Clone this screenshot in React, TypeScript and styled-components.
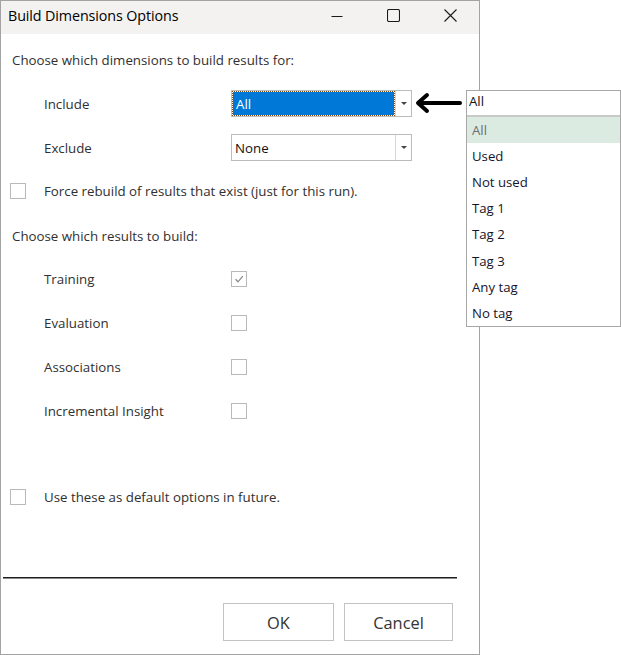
import React from "react";
import styled, { createGlobalStyle } from "styled-components";

const Global = createGlobalStyle`
  html, body { margin: 0; padding: 0; background: #ffffff; }
  body { font-family: "Open Sans", "Noto Sans", sans-serif; }
  * { box-sizing: border-box; }
`;

const Page = styled.div`
  position: relative;
  width: 621px;
  height: 655px;
  overflow: hidden;
`;

const Window = styled.div`
  width: 480px;
  height: 655px;
  border: 1px solid #a3a3a3;
  background: #ffffff;
  display: flex;
  flex-direction: column;
`;

const TitleBar = styled.div`
  height: 33px;
  flex: none;
  background: #f3f2f1;
  display: flex;
  align-items: center;
  padding: 0 0 4px 7px;
`;

const Title = styled.div`
  flex: 1;
  font-size: 14.3px;
  color: #000;
  letter-spacing: -0.1px;
`;

const CaptionButton = styled.div`
  width: 57px;
  height: 29px;
  display: flex;
  align-items: center;
  justify-content: center;
  color: #1a1a1a;
`;

const Content = styled.div`
  flex: 1;
  display: flex;
  flex-direction: column;
  padding: 16px 0 0 0;
  color: #303030;
  font-size: 13.3px;
`;

const Heading = styled.div<{ $top: number }>`
  margin-top: ${(p) => p.$top}px;
  height: 20px;
  line-height: 20px;
  padding-left: 11px;
`;

const FieldRow = styled.div<{ $top: number }>`
  margin-top: ${(p) => p.$top}px;
  height: 27px;
  display: grid;
  grid-template-columns: 187px 181px;
  align-items: center;
  padding-left: 43px;
`;

const Label = styled.span`
  white-space: nowrap;
`;

const Combo = styled.div`
  height: 27px;
  border: 1px solid #bcbcbc;
  display: flex;
  background: #fff;
`;

const ComboValue = styled.div<{ $focused?: boolean }>`
  flex: 1;
  display: flex;
  align-items: center;
  padding-left: 3px;
  margin: ${(p) => (p.$focused ? "1px" : "0")};
  font-size: 13.3px;
  color: ${(p) => (p.$focused ? "#ffffff" : "#111")};
  background: ${(p) => (p.$focused ? "#0078d7" : "transparent")};
  outline: ${(p) => (p.$focused ? "1px dotted #7a4a1a" : "none")};
`;

const ComboButton = styled.div`
  width: 16px;
  border-left: 1px solid #d6d6d6;
  display: flex;
  align-items: center;
  justify-content: center;
`;

const Caret = styled.span`
  width: 0;
  height: 0;
  border-left: 3px solid transparent;
  border-right: 3px solid transparent;
  border-top: 3px solid #444;
`;

const CheckRow = styled.div<{ $top: number }>`
  margin-top: ${(p) => p.$top}px;
  height: 16px;
  display: flex;
  align-items: center;
  padding-left: 9px;
`;

const CheckLabel = styled.span`
  margin-left: 18px;
  white-space: nowrap;
`;

const OptionRow = styled.div<{ $top: number }>`
  margin-top: ${(p) => p.$top}px;
  height: 20px;
  display: grid;
  grid-template-columns: 187px 16px;
  align-items: center;
  padding-left: 43px;
`;

const Box = styled.div`
  width: 16px;
  height: 16px;
  border: 1px solid #b9b9b9;
  background: #fff;
  display: flex;
  align-items: center;
  justify-content: center;
`;

const Separator = styled.div`
  margin: 72px 22px 0 2px;
  height: 2px;
  background: #1e1e1e;
  border-bottom: 1px solid #8a8a8a;
`;

const ButtonRow = styled.div`
  margin-top: 24px;
  display: flex;
  justify-content: flex-end;
  gap: 10px;
  padding-right: 26px;
`;

const DialogButton = styled.div<{ $w: number }>`
  width: ${(p) => p.$w}px;
  height: 38px;
  border: 1px solid #c3c3c3;
  background: #fff;
  display: flex;
  align-items: center;
  justify-content: center;
  font-size: 16.4px;
  color: #333;
`;

/* expanded list of the Include combo, floating over the window edge */
const DropList = styled.div`
  position: absolute;
  left: 466px;
  top: 90px;
  width: 155px;
  height: 237px;
  border: 1px solid #a8a8a8;
  background: #fff;
  display: flex;
  flex-direction: column;
  font-size: 13.2px;
`;

const DropEdit = styled.div`
  height: 26px;
  flex: none;
  padding: 1px 0 0 2px;
  line-height: 18px;
  border-bottom: 2px solid #c9c9c9;
  color: #111;
`;

const DropItem = styled.div<{ $active?: boolean }>`
  height: 26.2px;
  flex: none;
  display: flex;
  align-items: center;
  padding: 0 0 1px 5px;
  background: ${(p) => (p.$active ? "#dcebe2" : "transparent")};
  color: ${(p) => (p.$active ? "#6e6e6e" : "#14142a")};
`;

const Pointer = styled.svg`
  position: absolute;
  left: 414px;
  top: 92px;
`;

const items = ["All", "Used", "Not used", "Tag 1", "Tag 2", "Tag 3", "Any tag", "No tag"];

const options = [
  { label: "Training", checked: true, top: 23 },
  { label: "Evaluation", checked: false, top: 24 },
  { label: "Associations", checked: false, top: 24 },
  { label: "Incremental Insight", checked: false, top: 24 },
];

const Tick = () => (
  <svg width="12" height="12" viewBox="0 0 12 12">
    <path d="M2.5 6.3 L5 8.8 L9.8 3.2" fill="none" stroke="#8c8c8c" strokeWidth="1.3" />
  </svg>
);

export default function App() {
  return (
    <Page>
      <Global />
      <Window>
        <TitleBar>
          <Title>Build Dimensions Options</Title>
          <CaptionButton>
            <svg width="12" height="12" viewBox="0 0 12 12">
              <path d="M0.5 6.5 H11.5" stroke="#1a1a1a" strokeWidth="1" />
            </svg>
          </CaptionButton>
          <CaptionButton>
            <svg width="13" height="13" viewBox="0 0 13 13">
              <rect x="0.5" y="0.5" width="12" height="12" rx="1.5" fill="none" stroke="#1a1a1a" strokeWidth="1.1" />
            </svg>
          </CaptionButton>
          <CaptionButton>
            <svg width="13" height="13" viewBox="0 0 13 13">
              <path d="M0.5 0.5 L12.5 12.5 M12.5 0.5 L0.5 12.5" stroke="#1a1a1a" strokeWidth="1.1" />
            </svg>
          </CaptionButton>
        </TitleBar>
        <Content>
          <Heading $top={0}>Choose which dimensions to build results for:</Heading>
          <FieldRow $top={20}>
            <Label>Include</Label>
            <Combo>
              <ComboValue $focused>All</ComboValue>
              <ComboButton>
                <Caret />
              </ComboButton>
            </Combo>
          </FieldRow>
          <FieldRow $top={17}>
            <Label>Exclude</Label>
            <Combo>
              <ComboValue>None</ComboValue>
              <ComboButton>
                <Caret />
              </ComboButton>
            </Combo>
          </FieldRow>
          <CheckRow $top={22}>
            <Box />
            <CheckLabel>Force rebuild of results that exist (just for this run).</CheckLabel>
          </CheckRow>
          <Heading $top={27}>Choose which results to build:</Heading>
          {options.map((o) => (
            <OptionRow key={o.label} $top={o.top}>
              <Label>{o.label}</Label>
              <Box>{o.checked && <Tick />}</Box>
            </OptionRow>
          ))}
          <CheckRow $top={68}>
            <Box />
            <CheckLabel>Use these as default options in future.</CheckLabel>
          </CheckRow>
          <Separator />
          <ButtonRow>
            <DialogButton $w={111}>OK</DialogButton>
            <DialogButton $w={109}>Cancel</DialogButton>
          </ButtonRow>
        </Content>
      </Window>
      <Pointer width="50" height="24" viewBox="0 0 50 24">
        <path d="M46 11 H8" stroke="#000" strokeWidth="4" strokeLinecap="round" />
        <path d="M13 3 L4 11 L13 19" fill="none" stroke="#000" strokeWidth="4" strokeLinecap="round" strokeLinejoin="round" />
      </Pointer>
      <DropList>
        <DropEdit>All</DropEdit>
        {items.map((it, i) => (
          <DropItem key={it} $active={i === 0}>
            {it}
          </DropItem>
        ))}
      </DropList>
    </Page>
  );
}
